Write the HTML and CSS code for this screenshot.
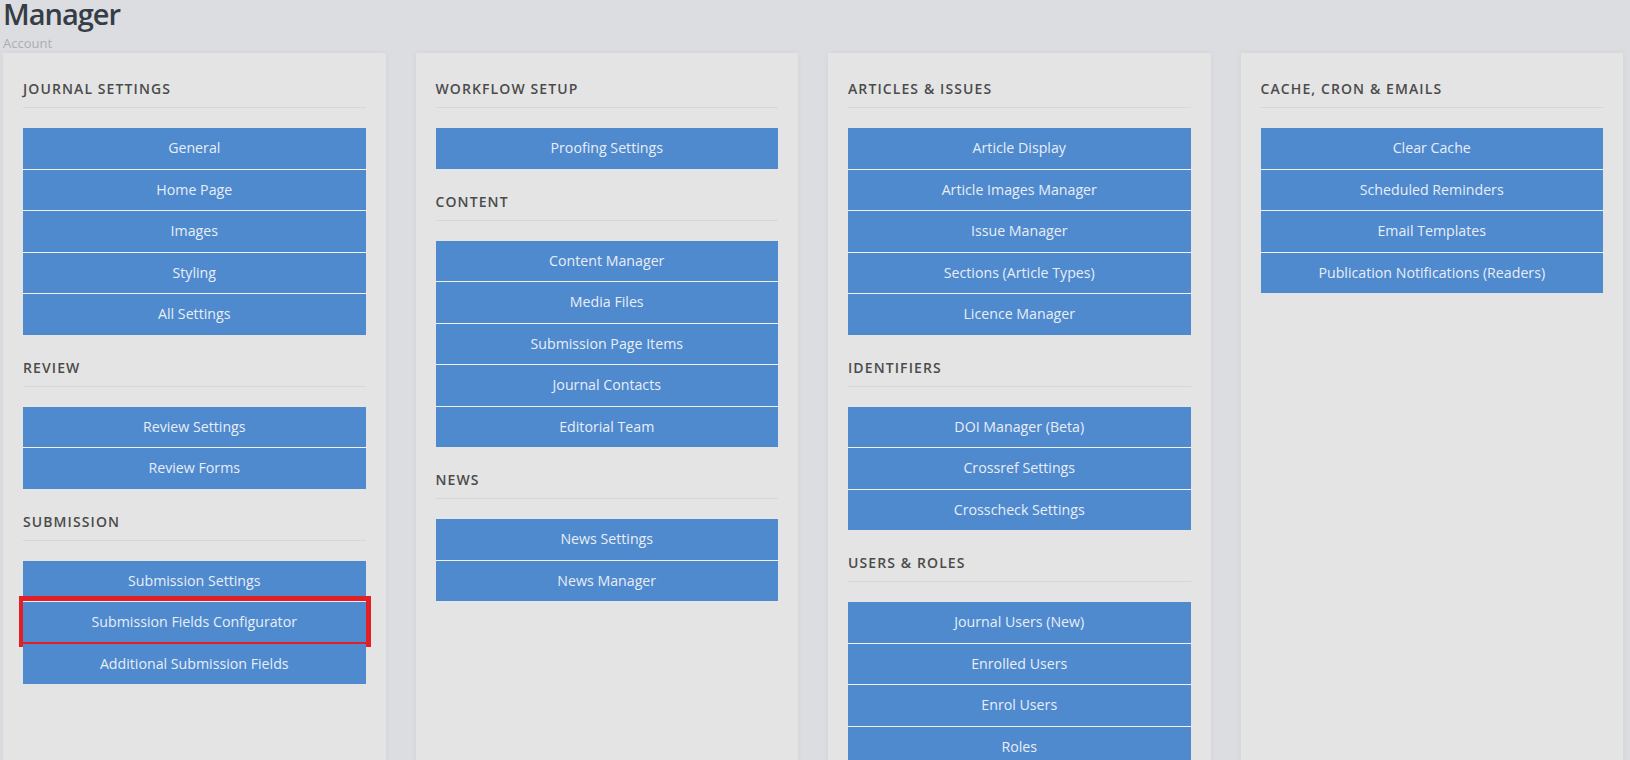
FILE: index.html
```html
<!DOCTYPE html>
<html>

<head>
  <meta charset="utf-8" />
  <meta name="viewport" content="width=device-width, initial-scale=1" />
  <title>Manager</title>
  <link rel="stylesheet" href="styles.css">
</head>

<body>
  <div class="page-head">
    <h1 class="page-title">Manager</h1>
    <div class="crumb">Account</div>
  </div>

  <div class="board">
    <div class="card">
      <h4 class="section-title">Journal Settings</h4>
      <div class="btn-list">
        <a class="btn">General</a>
        <a class="btn">Home Page</a>
        <a class="btn">Images</a>
        <a class="btn">Styling</a>
        <a class="btn">All Settings</a>
      </div>
      <h4 class="section-title">Review</h4>
      <div class="btn-list">
        <a class="btn">Review Settings</a>
        <a class="btn">Review Forms</a>
      </div>
      <h4 class="section-title">Submission</h4>
      <div class="btn-list">
        <a class="btn">Submission Settings</a>
        <a class="btn highlight">Submission Fields Configurator</a>
        <a class="btn">Additional Submission Fields</a>
      </div>
    </div>

    <div class="card">
      <h4 class="section-title">Workflow Setup</h4>
      <div class="btn-list">
        <a class="btn">Proofing Settings</a>
      </div>
      <h4 class="section-title">Content</h4>
      <div class="btn-list">
        <a class="btn">Content Manager</a>
        <a class="btn">Media Files</a>
        <a class="btn">Submission Page Items</a>
        <a class="btn">Journal Contacts</a>
        <a class="btn">Editorial Team</a>
      </div>
      <h4 class="section-title">News</h4>
      <div class="btn-list">
        <a class="btn">News Settings</a>
        <a class="btn">News Manager</a>
      </div>
    </div>

    <div class="card">
      <h4 class="section-title">Articles &amp; Issues</h4>
      <div class="btn-list">
        <a class="btn">Article Display</a>
        <a class="btn">Article Images Manager</a>
        <a class="btn">Issue Manager</a>
        <a class="btn">Sections (Article Types)</a>
        <a class="btn">Licence Manager</a>
      </div>
      <h4 class="section-title">Identifiers</h4>
      <div class="btn-list">
        <a class="btn">DOI Manager (Beta)</a>
        <a class="btn">Crossref Settings</a>
        <a class="btn">Crosscheck Settings</a>
      </div>
      <h4 class="section-title">Users &amp; Roles</h4>
      <div class="btn-list">
        <a class="btn">Journal Users (New)</a>
        <a class="btn">Enrolled Users</a>
        <a class="btn">Enrol Users</a>
        <a class="btn">Roles</a>
      </div>
    </div>

    <div class="card">
      <h4 class="section-title">Cache, Cron &amp; Emails</h4>
      <div class="btn-list">
        <a class="btn">Clear Cache</a>
        <a class="btn">Scheduled Reminders</a>
        <a class="btn">Email Templates</a>
        <a class="btn">Publication Notifications (Readers)</a>
      </div>
    </div>
  </div>
</body>

</html>
```

FILE: styles.css
```css
html,
body {
  margin: 0;
  height: 100%;
  background-color: #dcdde0;
  font-family: "Open Sans", "Noto Sans", Arial, sans-serif;
}

body {
  overflow: hidden;
}

.page-head {
  padding: 0 3px;
  height: 53px;
}

.page-title {
  margin: 0;
  font-size: 29px;
  line-height: 27px;
  font-weight: 600;
  letter-spacing: -1px;
  color: #363d47;
}

.crumb {
  margin-top: 7px;
  font-size: 13px;
  line-height: 18px;
  color: #adadad;
}

.board {
  display: grid;
  grid-template-columns: repeat(4, 1fr);
  column-gap: 30px;
  padding: 0 7px 0 3px;
  height: 800px;
}

.card {
  background-color: #e4e4e4;
  box-shadow: 0 0 6px rgba(0, 0, 0, .05);
  padding: 26px 20px 0;
}

.section-title {
  margin: 0 0 20px;
  padding-bottom: 8px;
  border-bottom: 1px solid #d7d7d7;
  font-size: 14px;
  line-height: 20px;
  font-weight: 600;
  letter-spacing: 1.1px;
  text-transform: uppercase;
  color: #4b4b4b;
}

.btn-list {
  display: flex;
  flex-direction: column;
  margin-bottom: 22px;
}

.btn {
  position: relative;
  display: block;
  height: 40.5px;
  line-height: 40px;
  border-bottom: 1px solid #f2f2f2;
  background-color: #4f89ce;
  color: #e8eef7;
  font-size: 14.2px;
  text-align: center;
  cursor: pointer;
}

.btn:last-child {
  border-bottom-color: transparent;
  background-clip: padding-box;
}

/* red frame drawn round the item being pointed at */
.highlight::after {
  content: "";
  position: absolute;
  top: -6px;
  left: -4px;
  right: -5px;
  bottom: -4px;
  border: 5px solid #e31e24;
  border-left-width: 4px;
}
```
